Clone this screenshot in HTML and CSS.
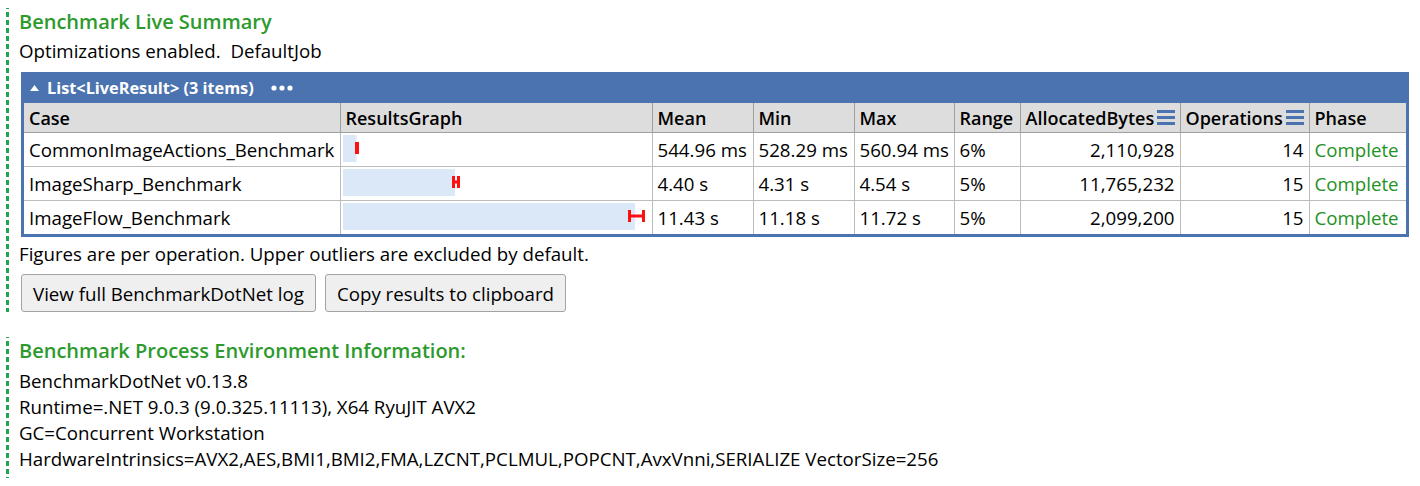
FILE: index.html
```html
<!DOCTYPE html>
<html>
<head>
<meta charset="utf-8">
<title>Benchmark Live Summary</title>
<link rel="stylesheet" href="styles.css">
</head>
<body>
<div class="section first">
  <h1 class="heading">Benchmark Live Summary</h1>
  <div class="line">Optimizations enabled.&nbsp; DefaultJob</div>
  <div class="grid">
    <div class="grid-title">
      <svg class="tri" width="9" height="6" viewBox="0 0 9 6"><path d="M0 6 L4.5 0 L9 6 Z" fill="#fff"/></svg>
      <span class="grid-name">List&lt;LiveResult&gt; (3 items)</span>
      <svg class="dots" width="22" height="6" viewBox="0 0 22 6"><circle cx="3" cy="3" r="2.6" fill="#fff"/><circle cx="11" cy="3" r="2.6" fill="#fff"/><circle cx="19" cy="3" r="2.6" fill="#fff"/></svg>
    </div>
    <table class="results">
      <colgroup>
        <col class="c-case"><col class="c-graph"><col class="c-mean"><col class="c-min"><col class="c-max"><col class="c-range"><col class="c-alloc"><col class="c-ops"><col class="c-phase">
      </colgroup>
      <thead>
        <tr>
          <th>Case</th>
          <th>ResultsGraph</th>
          <th>Mean</th>
          <th>Min</th>
          <th>Max</th>
          <th>Range</th>
          <th><span class="th-in">AllocatedBytes<svg class="sum" width="18" height="15" viewBox="0 0 18 15"><rect x="0" y="0" width="18" height="3"/><rect x="0" y="6" width="18" height="3"/><rect x="0" y="12" width="18" height="3"/></svg></span></th>
          <th><span class="th-in">Operations<svg class="sum" width="18" height="15" viewBox="0 0 18 15"><rect x="0" y="0" width="18" height="3"/><rect x="0" y="6" width="18" height="3"/><rect x="0" y="12" width="18" height="3"/></svg></span></th>
          <th>Phase</th>
        </tr>
      </thead>
      <tbody>
        <tr>
          <td>CommonImageActions_Benchmark</td>
          <td class="graph"><svg width="305" height="27" viewBox="0 0 305 27"><rect x="0" y="0" width="13.5" height="27" fill="#dbe8f8"/><rect x="12" y="7" width="4" height="12" fill="#ff1010"/></svg></td>
          <td>544.96 ms</td>
          <td>528.29 ms</td>
          <td>560.94 ms</td>
          <td>6%</td>
          <td class="num">2,110,928</td>
          <td class="num">14</td>
          <td class="ok">Complete</td>
        </tr>
        <tr>
          <td>ImageSharp_Benchmark</td>
          <td class="graph"><svg width="305" height="27" viewBox="0 0 305 27"><rect x="0" y="0" width="112" height="27" fill="#dbe8f8"/><rect x="109" y="7" width="3" height="12" fill="#ff1010"/><rect x="114" y="7" width="3" height="12" fill="#ff1010"/><rect x="111" y="11.5" width="4" height="3" fill="#ff1010"/></svg></td>
          <td>4.40 s</td>
          <td>4.31 s</td>
          <td>4.54 s</td>
          <td>5%</td>
          <td class="num">11,765,232</td>
          <td class="num">15</td>
          <td class="ok">Complete</td>
        </tr>
        <tr>
          <td>ImageFlow_Benchmark</td>
          <td class="graph"><svg width="305" height="27" viewBox="0 0 305 27"><rect x="0" y="0" width="292" height="27" fill="#dbe8f8"/><rect x="285" y="7" width="3" height="12" fill="#ff1010"/><rect x="299" y="7" width="3" height="12" fill="#ff1010"/><rect x="287" y="11.5" width="13" height="3" fill="#ff1010"/></svg></td>
          <td>11.43 s</td>
          <td>11.18 s</td>
          <td>11.72 s</td>
          <td>5%</td>
          <td class="num">2,099,200</td>
          <td class="num">15</td>
          <td class="ok">Complete</td>
        </tr>
      </tbody>
    </table>
  </div>
  <div class="line note">Figures are per operation. Upper outliers are excluded by default.</div>
  <div class="buttons">
    <button class="btn" type="button">View full BenchmarkDotNet log</button>
    <button class="btn" type="button">Copy results to clipboard</button>
  </div>
</div>
<div class="section second">
  <h2 class="heading sub">Benchmark Process Environment Information:</h2>
  <div class="env">
    <div class="line">BenchmarkDotNet v0.13.8</div>
    <div class="line">Runtime=.NET 9.0.3 (9.0.325.11113), X64 RyuJIT AVX2</div>
    <div class="line">GC=Concurrent Workstation</div>
    <div class="line">HardwareIntrinsics=AVX2,AES,BMI1,BMI2,FMA,LZCNT,PCLMUL,POPCNT,AvxVnni,SERIALIZE VectorSize=256</div>
  </div>
</div>
</body>
</html>
```
FILE: styles.css
```css
html, body {
  margin: 0;
  padding: 0;
  background: #fff;
}
body {
  font-family: "Open Sans", "Noto Sans", sans-serif;
  font-size: 18.7px;
  color: #000;
  padding: 8px 0 0 6px;
}
.section {
  padding-left: 13px;
  background-image: linear-gradient(to bottom, #1ea650 5px, transparent 5px);
  background-size: 3px 8px;
  background-repeat: repeat-y;
  background-position: 0 4px;
}
.second {
  margin-top: 25px;
  padding-bottom: 6px;
}
.heading {
  margin: 0;
  font-size: 20px;
  line-height: 28px;
  font-weight: 600;
  color: #2c9a2c;
}
.first .heading {
  margin-bottom: 2px;
}
.line {
  line-height: 26px;
  white-space: nowrap;
}
.grid {
  width: 1388px;
  margin: 8px 0 0 2px;
  background: #4b73b0;
  padding: 0 3px 3px 3px;
  box-sizing: border-box;
}
.grid-title {
  height: 31px;
  display: flex;
  align-items: center;
  padding-left: 6px;
  color: #fff;
  font-weight: 700;
  font-size: 16.3px;
}
.tri {
  margin-right: 8px;
  margin-top: 1px;
}
.dots {
  margin-left: 17px;
}
.results {
  width: 1382px;
  table-layout: fixed;
  border-collapse: collapse;
  background: #fff;
}
.c-case { width: 316px; }
.c-graph { width: 312px; }
.c-mean { width: 101px; }
.c-min { width: 101px; }
.c-max { width: 100px; }
.c-range { width: 66px; }
.c-alloc { width: 160px; }
.c-ops { width: 129px; }
.c-phase { width: 97px; }
.results th {
  background: #dddddd;
  height: 29px;
  padding: 0 5px;
  text-align: left;
  font-size: 18px;
  font-weight: 600;
  line-height: 24px;
  border: 1px solid #a0a0a0;
  border-top: 0;
  white-space: nowrap;
  overflow: hidden;
}
.results th:first-child, .results td:first-child { border-left: 0; }
.results th:last-child, .results td:last-child { border-right: 0; }
.results tbody tr:last-child td { border-bottom: 0; }
.th-in {
  display: inline-flex;
  align-items: center;
}
.sum {
  fill: #4b73b0;
  margin-left: 3px;
}
.results td {
  height: 33px;
  padding: 0 5px;
  line-height: 24px;
  border: 1px solid #bcbcbc;
  white-space: nowrap;
  overflow: hidden;
}
.results td.graph {
  height: 31px;
  padding: 2px 2px 0 2px;
  vertical-align: top;
}
.results td.graph svg {
  display: block;
}
.results td.num {
  text-align: right;
}
.results td.ok {
  color: #249124;
}
.note {
  margin-top: 4px;
}
.buttons {
  display: flex;
  gap: 9px;
  margin: 7px 0 0 2px;
}
.btn {
  font-family: "Open Sans", "Noto Sans", sans-serif;
  font-size: 18.7px;
  color: #000;
  height: 38px;
  padding: 0 11px;
  background: #efefef;
  border: 1px solid #a3a3a3;
  border-radius: 3px;
}
.env {
  margin-top: 3px;
}
```
